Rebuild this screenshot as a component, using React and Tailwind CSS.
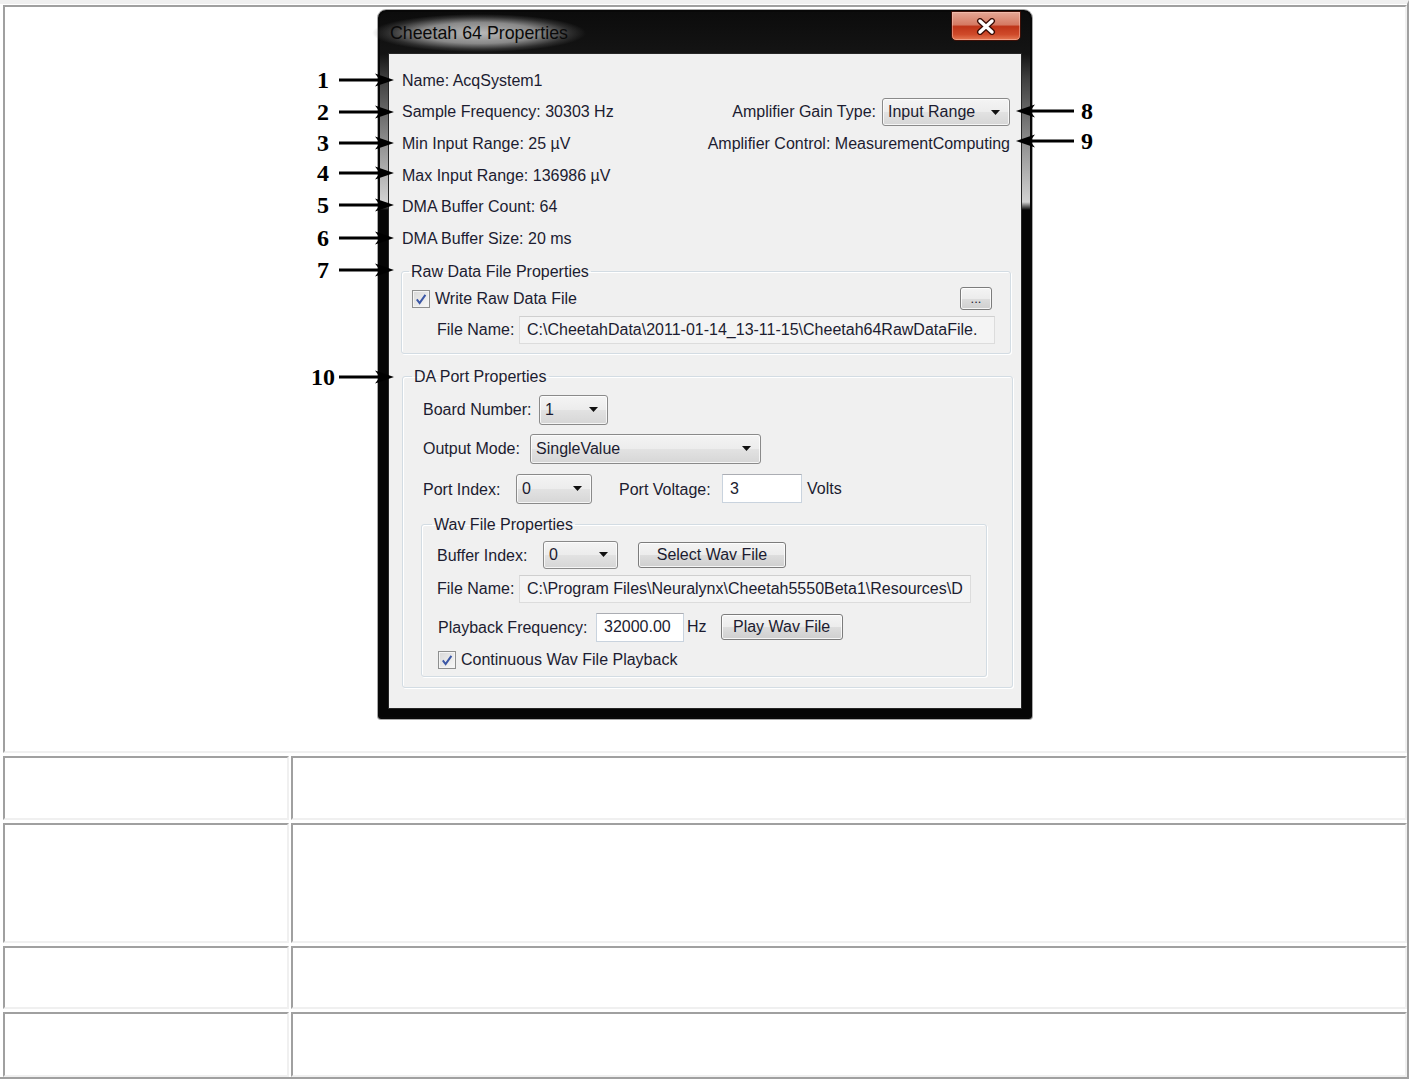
import React from 'react'

const UI = "font-['Liberation_Sans',Arial,sans-serif] text-[16px] text-[#1c1c30] leading-[18px]"

function Arrow() {
  return (
    <svg width="9" height="5" viewBox="0 0 9 5" className="shrink-0">
      <path d="M0 0 H9 L4.5 5 Z" fill="#111" />
    </svg>
  )
}

function Combo({ value, className }) {
  return (
    <div className={`shrink-0 flex items-center justify-between rounded-[3px] border border-[#8a8a8a] bg-[linear-gradient(180deg,#f4f4f4_0%,#ececec_50%,#e2e2e2_51%,#d6d6d6_100%)] shadow-[inset_0_0_0_1px_rgba(255,255,255,0.75)] pl-[5px] pr-[9px] ${className}`}>
      <span className="whitespace-nowrap">{value}</span>
      <Arrow />
    </div>
  )
}

function Button({ children, className }) {
  return (
    <div className={`shrink-0 flex items-center justify-center rounded-[3px] border border-[#7c7c7c] bg-[linear-gradient(180deg,#f4f4f4_0%,#ececec_50%,#dddddd_51%,#cfcfcf_100%)] shadow-[inset_0_0_0_1px_rgba(255,255,255,0.8)] whitespace-nowrap ${className}`}>
      {children}
    </div>
  )
}

function ReadOnlyBox({ value, className }) {
  return (
    <div className={`flex items-center overflow-hidden whitespace-nowrap border border-[#dcdcdc] border-t-[#cfcfcf] bg-[#f4f4f4] pl-[7px] ${className}`}>
      {value}
    </div>
  )
}

function TextBox({ value, className }) {
  return (
    <div className={`shrink-0 flex items-center whitespace-nowrap border border-[#c9d3de] border-t-[#abadb3] bg-white pl-[7px] ${className}`}>
      {value}
    </div>
  )
}

function Check() {
  return (
    <span className="w-[18px] h-[18px] shrink-0 border border-[#8e8f8f] bg-[linear-gradient(135deg,#d8d8d8,#f8f8f8)] flex items-center justify-center shadow-[inset_0_0_0_1px_#f4f4f4]">
      <svg width="12" height="12" viewBox="0 0 12 12">
        <path d="M1.8 6.4 L4.6 10 L10.4 1.8" fill="none" stroke="#3b57a6" strokeWidth="2" />
      </svg>
    </span>
  )
}

function LeftCallout({ n, className }) {
  return (
    <div className={`absolute z-10 right-[636px] h-[24px] flex items-center ${className}`}>
      <span className="w-[24px] mr-[4px] text-center font-['Liberation_Serif',serif] font-bold text-[24px] leading-none text-black">{n}</span>
      <svg width="55" height="14" viewBox="0 0 55 14">
        <path d="M0 7 H44" stroke="#000" strokeWidth="3" />
        <path d="M55 7 L36 0.5 L41 7 L36 13.5 Z" fill="#000" />
      </svg>
    </div>
  )
}

function RightCallout({ n, className }) {
  return (
    <div className={`absolute z-10 left-[636px] h-[24px] flex items-center ${className}`}>
      <svg width="58" height="14" viewBox="0 0 58 14">
        <path d="M12 7 H58" stroke="#000" strokeWidth="3" />
        <path d="M0 7 L19 0.5 L14 7 L19 13.5 Z" fill="#000" />
      </svg>
      <span className="w-[14px] ml-[6px] text-center font-['Liberation_Serif',serif] font-bold text-[24px] leading-none text-black">{n}</span>
    </div>
  )
}

function Dialog() {
  return (
    <div className="relative w-[654px] h-[709px] flex flex-col rounded-t-[8px] rounded-b-[3px] border-2 border-[#080808] shadow-[0_0_0_1px_#a8a8a8] bg-[linear-gradient(180deg,#0c0c0c_0px,#141414_42px,#3e3e3e_66px,#9a9a9a_140px,#d2d2d2_190px,#050505_198px,#050505_100%)]">
      {/* title bar */}
      <div className="h-[41px] shrink-0 flex items-start justify-between">
        <div className="self-center -ml-[8px] px-[18px] py-[9px] rounded-full bg-[radial-gradient(closest-side,rgba(185,185,185,1)_0%,rgba(150,150,150,0.9)_55%,rgba(90,90,90,0.4)_85%,rgba(40,40,40,0)_100%)] font-['Liberation_Sans',Arial,sans-serif] text-[17.8px] leading-[20px] text-[#0a0a0a]">
          Cheetah 64 Properties
        </div>
        <div className="-mt-px mr-[9px] w-[70px] h-[30px] flex items-center justify-center rounded-b-[5px] border border-[#3d0f06] shadow-[inset_0_0_0_1px_rgba(255,210,200,0.45)] bg-[linear-gradient(180deg,#e6a896_0%,#d57a63_45%,#bf3519_52%,#cf4a2a_80%,#e57a55_100%)]">
          <svg width="20" height="17" viewBox="0 0 20 17">
            <path d="M4 3 L16 14 M16 3 L4 14" stroke="#3a0c04" strokeWidth="6" strokeLinecap="round" />
            <path d="M4 3 L16 14 M16 3 L4 14" stroke="#fff" strokeWidth="3.4" strokeLinecap="round" />
          </svg>
        </div>
      </div>

      {/* client area */}
      <div className={`mx-[8px] mb-[8px] flex-1 flex flex-col border border-[#262626] bg-[#f0f0f0] pl-[13px] pr-[11px] pt-[11px] ${UI}`}>
        <div className="h-[31.6px] flex items-center">Name: AcqSystem1</div>
        <div className="h-[31.6px] flex items-center justify-between">
          <span>Sample Frequency: 30303 Hz</span>
          <div className="flex items-center gap-[6px]">
            <span>Amplifier Gain Type:</span>
            <Combo value="Input Range" className="w-[128px] h-[28px]" />
          </div>
        </div>
        <div className="h-[31.6px] flex items-center justify-between">
          <span>Min Input Range: 25 µV</span>
          <span>Amplifier Control: MeasurementComputing</span>
        </div>
        <div className="h-[31.6px] flex items-center">Max Input Range: 136986 µV</div>
        <div className="h-[31.6px] flex items-center">DMA Buffer Count: 64</div>
        <div className="h-[31.6px] flex items-center">DMA Buffer Size: 20 ms</div>

        {/* raw data file */}
        <fieldset className="mt-[8px] -ml-px -mr-px p-0 border border-[#d3dce3] rounded-[3px] shadow-[1px_1px_0_#fff,inset_1px_1px_0_#fff]">
          <legend className="ml-[7px] px-[2px] leading-[18px]">Raw Data File Properties</legend>
          <div className="pl-[10px] pr-[15px] pb-[9px]">
            <div className="mt-[6px] h-[24px] flex items-center">
              <Check />
              <span className="ml-[5px]">Write Raw Data File</span>
              <Button className="ml-auto mr-[3px] w-[32px] h-[23px] text-[13px] leading-none">...</Button>
            </div>
            <div className="mt-[5px] h-[28px] flex items-center pl-[25px]">
              <span className="w-[82px] shrink-0">File Name:</span>
              <ReadOnlyBox value="C:\CheetahData\2011-01-14_13-11-15\Cheetah64RawDataFile." className="flex-1 h-[28px]" />
            </div>
          </div>
        </fieldset>

        {/* DA port */}
        <fieldset className="mt-[14px] -mr-[3px] p-0 border border-[#d3dce3] rounded-[3px] shadow-[1px_1px_0_#fff,inset_1px_1px_0_#fff]">
          <legend className="ml-[9px] px-[2px] leading-[18px]">DA Port Properties</legend>
          <div className="pl-[20px] pr-[25px] pb-[10px]">
            <div className="mt-[9px] h-[30px] flex items-center">
              <span className="w-[116px] shrink-0">Board Number:</span>
              <Combo value="1" className="w-[69px] h-[30px]" />
            </div>
            <div className="mt-[9px] h-[30px] flex items-center">
              <span className="w-[107px] shrink-0">Output Mode:</span>
              <Combo value="SingleValue" className="w-[231px] h-[30px]" />
            </div>
            <div className="mt-[10px] h-[30px] flex items-center">
              <span className="w-[93px] shrink-0 pt-[3px]">Port Index:</span>
              <Combo value="0" className="w-[76px] h-[30px]" />
              <span className="ml-[27px] w-[103px] shrink-0 pt-[3px]">Port Voltage:</span>
              <TextBox value="3" className="w-[80px] h-[29px]" />
              <span className="ml-[5px] pt-[1px]">Volts</span>
            </div>

            {/* wav file */}
            <fieldset className="mt-[12px] -ml-[2px] p-0 border border-[#d3dce3] rounded-[3px] shadow-[1px_1px_0_#fff,inset_1px_1px_0_#fff]">
              <legend className="ml-[10px] px-[2px] leading-[18px]">Wav File Properties</legend>
              <div className="pl-[15px] pb-[6px]">
                <div className="mt-[7px] h-[28px] flex items-center">
                  <span className="w-[106px] shrink-0 pt-[2px]">Buffer Index:</span>
                  <Combo value="0" className="w-[75px] h-[28px]" />
                  <Button className="ml-[20px] w-[148px] h-[26px]">Select Wav File</Button>
                </div>
                <div className="mt-[6px] h-[28px] flex items-center">
                  <span className="w-[82px] shrink-0">File Name:</span>
                  <ReadOnlyBox value="C:\Program Files\Neuralynx\Cheetah5550Beta1\Resources\D" className="w-[452px] h-[28px]" />
                </div>
                <div className="mt-[10px] h-[29px] flex items-center pl-[1px]">
                  <span className="w-[158px] shrink-0 pt-[1px]">Playback Frequency:</span>
                  <TextBox value="32000.00" className="w-[88px] h-[29px]" />
                  <span className="ml-[3px]">Hz</span>
                  <Button className="ml-[14px] w-[122px] h-[26px]">Play Wav File</Button>
                </div>
                <div className="mt-[8px] h-[20px] flex items-center pl-[1px]">
                  <Check />
                  <span className="ml-[5px]">Continuous Wav File Playback</span>
                </div>
              </div>
            </fieldset>
          </div>
        </fieldset>
      </div>

      <LeftCallout n="1" className="top-[56px]" />
      <LeftCallout n="2" className="top-[88px]" />
      <LeftCallout n="3" className="top-[119px]" />
      <LeftCallout n="4" className="top-[149px]" />
      <LeftCallout n="5" className="top-[181px]" />
      <LeftCallout n="6" className="top-[214px]" />
      <LeftCallout n="7" className="top-[246px]" />
      <LeftCallout n="10" className="top-[353px]" />
      <RightCallout n="8" className="top-[87px]" />
      <RightCallout n="9" className="top-[117px]" />
    </div>
  )
}

const CELL = 'border-2 border-t-[#a0a0a0] border-l-[#a0a0a0] border-r-[#f0f0f0] border-b-[#f0f0f0]'

export default function App() {
  return (
    <div className="w-[1410px] h-[1079px] bg-white overflow-hidden">
      <div className="w-[1409px] h-[1079px] flex flex-col gap-[3px] pl-[3px] pt-[1px] border-t-4 border-t-[#f0f0f0] border-r-2 border-r-[#a0a0a0] border-b-2 border-b-[#a0a0a0]">
        <div className={`h-[748px] shrink-0 flex justify-center pt-[3px] ${CELL}`}>
          <Dialog />
        </div>
        <div className="h-[64px] shrink-0 flex gap-[2px]">
          <div className={`w-[286px] ${CELL}`} />
          <div className={`flex-1 ${CELL}`} />
        </div>
        <div className="h-[120px] shrink-0 flex gap-[2px]">
          <div className={`w-[286px] ${CELL}`} />
          <div className={`flex-1 ${CELL}`} />
        </div>
        <div className="h-[63px] shrink-0 flex gap-[2px]">
          <div className={`w-[286px] ${CELL}`} />
          <div className={`flex-1 ${CELL}`} />
        </div>
        <div className="h-[65px] shrink-0 flex gap-[2px]">
          <div className={`w-[286px] ${CELL}`} />
          <div className={`flex-1 ${CELL}`} />
        </div>
      </div>
    </div>
  )
}
